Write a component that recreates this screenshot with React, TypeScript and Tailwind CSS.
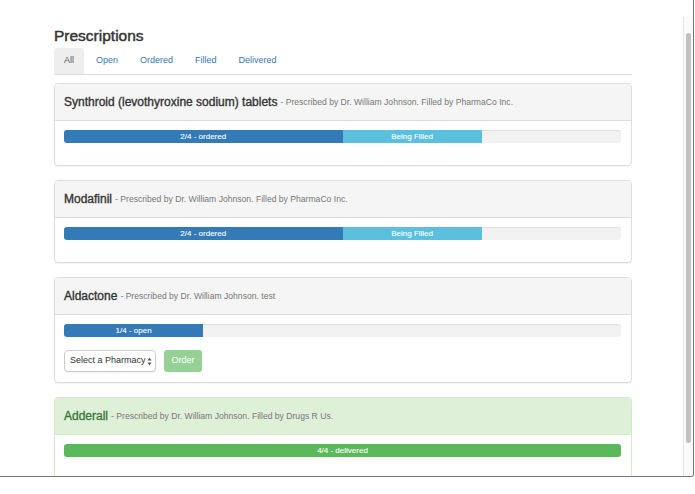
import React from "react";

type Seg = { pct: number; color: string; label: string };

const font = { fontFamily: '"Liberation Sans", Arial, Helvetica, sans-serif' };

function Progress({ segs, className = "" }: { segs: Seg[]; className?: string }) {
  return (
    <div className={`h-[13px] w-full rounded-[3px] bg-[#f2f2f2] shadow-[inset_0_1px_1px_rgba(0,0,0,0.08)] overflow-hidden flex ${className}`}>
      {segs.map((s, i) => (
        <div
          key={i}
          className="h-full flex items-center justify-center text-white text-[8px] leading-none [-webkit-text-stroke:0.1px_#ffffff]"
          style={{ width: `${s.pct}%`, backgroundColor: s.color }}
        >
          {s.label}
        </div>
      ))}
    </div>
  );
}

function Panel({
  title,
  sub,
  segs,
  success = false,
  extraBottom = false,
  children,
}: {
  title: string;
  sub: string;
  segs: Seg[];
  success?: boolean;
  extraBottom?: boolean;
  children?: React.ReactNode;
}) {
  return (
    <div
      className={`rounded-[4px] border bg-white shadow-[0_1px_1px_rgba(0,0,0,0.05)] ${
        success ? "border-[#d6e9c6]" : "border-[#dddddd]"
      }`}
    >
      <div
        className={`h-[37px] flex items-center pl-[9px] border-b rounded-t-[3px] ${
          success ? "bg-[#dff0d8] border-[#d6e9c6]" : "bg-[#f5f5f5] border-[#dddddd]"
        }`}
      >
        <span
          className={`text-[12px] leading-none ${
            success ? "text-[#3c763d] [-webkit-text-stroke:0.35px_#3c763d]" : "text-[#333333] [-webkit-text-stroke:0.35px_#333333]"
          }`}
        >
          {title}
        </span>
        <span className="text-[8.6px] leading-none text-[#777777] ml-[3px]">- {sub}</span>
      </div>
      <div className={`pt-[9px] pl-[9px] pr-[10px] ${extraBottom ? "pb-[10px]" : "pb-[9px]"}`}>
        <Progress segs={segs} className="mb-[13px]" />
        {children}
      </div>
    </div>
  );
}

export default function App() {
  const ordered: Seg[] = [
    { pct: 50, color: "#337ab7", label: "2/4 - ordered" },
    { pct: 25, color: "#5bc0de", label: "Being Filled" },
  ];
  return (
    <div className="w-[695px] h-[494px] bg-white overflow-hidden" style={font}>
      <div className="w-[694px] h-[477px] flex border-b border-r border-[#777777] rounded-br-[3px] overflow-hidden">
        <main className="flex-1 overflow-hidden">
          <div className="ml-[54px] w-[578px] pt-[27px]">
            <h1 className="text-[15.5px] leading-[18px] text-[#333333] [-webkit-text-stroke:0.45px_#333333]">Prescriptions</h1>
            <div className="mt-[3px] flex border-b border-[#dddddd] text-[9px]">
              <div className="h-[26px] px-[10px] mr-[2px] flex items-center bg-[#eeeeee] rounded-t-[3px] text-[#555555]">All</div>
              <div className="h-[26px] px-[10px] mr-[2px] flex items-center text-[#337ab7]">Open</div>
              <div className="h-[26px] px-[10px] mr-[2px] flex items-center text-[#337ab7]">Ordered</div>
              <div className="h-[26px] px-[10px] mr-[2px] flex items-center text-[#337ab7]">Filled</div>
              <div className="h-[26px] px-[10px] mr-[2px] flex items-center text-[#337ab7]">Delivered</div>
            </div>
            <div className="mt-[8px] flex flex-col gap-[14px]">
              <Panel
                title="Synthroid (levothyroxine sodium) tablets"
                sub="Prescribed by Dr. William Johnson. Filled by PharmaCo Inc."
                segs={ordered}
              />
              <Panel
                title="Modafinil"
                sub="Prescribed by Dr. William Johnson. Filled by PharmaCo Inc."
                segs={ordered}
              />
              <Panel
                title="Aldactone"
                sub="Prescribed by Dr. William Johnson. test"
                segs={[{ pct: 25, color: "#337ab7", label: "1/4 - open" }]}
                extraBottom
              >
                <div className="flex items-center gap-[8px]">
                  <div className="w-[92px] h-[22px] rounded-[4px] border border-[#cccccc] bg-white flex items-center pl-[5px] pr-[3px] text-[9px] text-[#333333] shadow-[0_1px_1px_rgba(0,0,0,0.06)]">
                    <span className="flex-1 whitespace-nowrap">Select a Pharmacy</span>
                    <svg width="5" height="9" viewBox="0 0 5 9">
                      <path d="M2.5 0.5 L4.5 3.5 L0.5 3.5 Z" fill="#555" />
                      <path d="M2.5 8.5 L4.5 5.5 L0.5 5.5 Z" fill="#555" />
                    </svg>
                  </div>
                  <div className="w-[38px] h-[22px] rounded-[3px] bg-[#95d195] text-white text-[9px] flex items-center justify-center">
                    Order
                  </div>
                </div>
              </Panel>
              <Panel
                title="Adderall"
                sub="Prescribed by Dr. William Johnson. Filled by Drugs R Us."
                segs={[{ pct: 100, color: "#5cb85c", label: "4/4 - delivered" }]}
                success
              >
                <div className="h-[40px]" />
              </Panel>
            </div>
          </div>
        </main>
        <div className="w-[10px] pt-[17px] flex flex-col">
          <div className="flex-1 bg-[#fafafa] border-l border-[#e6e6e6] pt-[16px] pl-[2px]">
            <div className="w-[5px] h-[410px] rounded-full bg-[#c1c1c1]" />
          </div>
        </div>
      </div>
    </div>
  );
}
